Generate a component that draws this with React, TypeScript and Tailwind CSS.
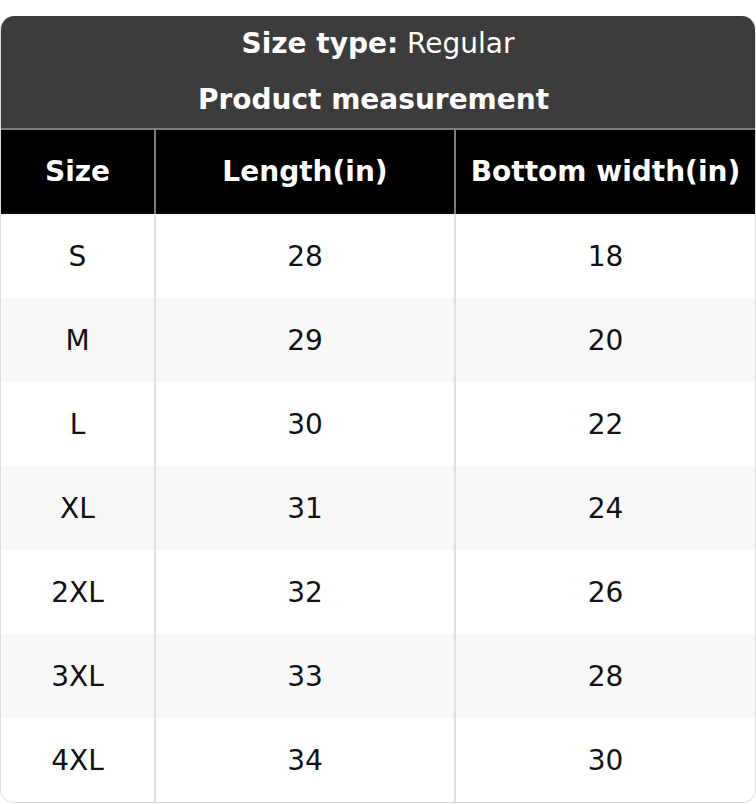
const rows = [
  ["S", "28", "18"],
  ["M", "29", "20"],
  ["L", "30", "22"],
  ["XL", "31", "24"],
  ["2XL", "32", "26"],
  ["3XL", "33", "28"],
  ["4XL", "34", "30"],
];

export default function App() {
  return (
    <div className="w-[756px] h-[804px] bg-white pt-4 font-['DejaVu_Sans',sans-serif]">
      <div className="rounded-[14px] overflow-hidden border border-[#dcdcdc] border-t-0">
        {/* Title block */}
        <div className="bg-[#3c3c3c] text-white text-[28px] text-center h-[112px] flex flex-col">
          <div className="h-[56px] leading-[56px]">
            <span className="font-bold">Size type:</span> Regular
          </div>
          <div className="h-[56px] leading-[56px] font-bold pr-[9px]">Product measurement</div>
        </div>
        <div className="h-[2px] bg-[#7d7d7d]" />

        <table className="w-full border-collapse table-fixed text-[28px] text-center">
          <colgroup>
            <col className="w-[154px]" />
            <col className="w-[300px]" />
            <col />
          </colgroup>
          <thead>
            <tr className="bg-black text-white h-[84px]">
              <th className="font-bold">Size</th>
              <th className="font-bold border-l-2 border-[#7d7d7d]">Length(in)</th>
              <th className="font-bold border-l-2 border-[#7d7d7d]">Bottom width(in)</th>
            </tr>
          </thead>
          <tbody className="text-[#111]">
            {rows.map((r, i) => (
              <tr key={r[0]} className={(i % 2 ? "bg-[#f8f8f8]" : "bg-white") + " h-[84px]"}>
                <td className="pt-[2px]">{r[0]}</td>
                <td className="pt-[2px] border-l-2 border-[#e0e0e0]">{r[1]}</td>
                <td className="pt-[2px] border-l-2 border-[#e0e0e0]">{r[2]}</td>
              </tr>
            ))}
          </tbody>
        </table>
      </div>
    </div>
  );
}
